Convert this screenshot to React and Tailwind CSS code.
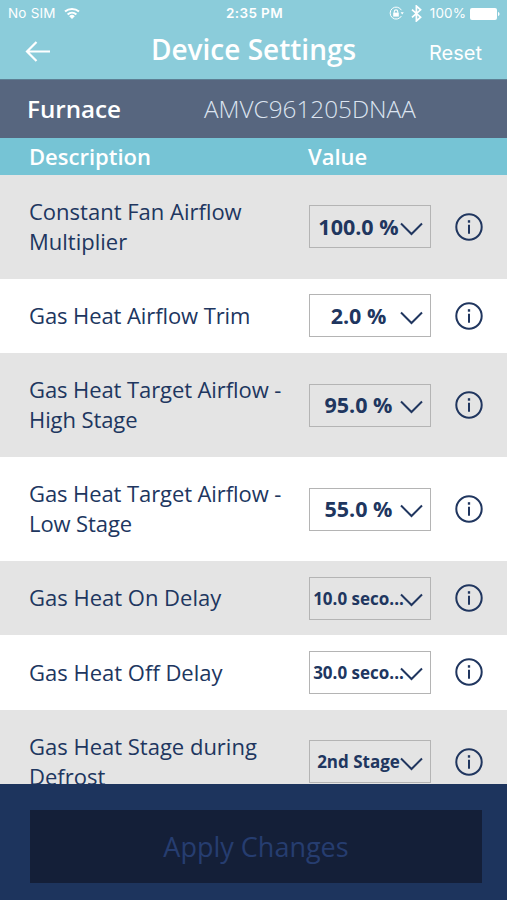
import { useState } from 'react';

const ROWS = [
  { label: 'Constant Fan Airflow Multiplier', value: '100.0 %', tall: true },
  { label: 'Gas Heat Airflow Trim', value: '2.0 %', tight: true },
  { label: 'Gas Heat Target Airflow - High Stage', value: '95.0 %', tall: true, tight: true },
  { label: 'Gas Heat Target Airflow - Low Stage', value: '55.0 %', tall: true, tight: true },
  { label: 'Gas Heat On Delay', value: '10.0 seco...', small: true },
  { label: 'Gas Heat Off Delay', value: '30.0 seco...', small: true },
  { label: 'Gas Heat Stage during Defrost', value: '2nd Stage', small: true, tall: true }
];

function StatusBar() {
  return (
    <div className="grid h-[27px] grid-cols-3 items-center pl-2 pr-[7px] font-['Inter',sans-serif] text-[13.5px] leading-none text-white">
      <div className="flex items-center gap-[8px]">
        <span className="tracking-[0.2px]">No SIM</span>
        <svg width="16" height="13" viewBox="0 0 16 13" fill="none" stroke="currentColor" strokeWidth="2">
          <path d="M1 4.6a10.4 10.4 0 0 1 14 0" />
          <path d="M3.6 7.4a6.6 6.6 0 0 1 8.8 0" />
          <path d="M8 12 5.2 9.2a4 4 0 0 1 5.6 0Z" fill="currentColor" stroke="none" />
        </svg>
      </div>
      <span className="pl-px text-center font-semibold tracking-[0.4px]">2:35 PM</span>
      <div className="flex items-center justify-end">
        <svg className="mr-[7px]" width="15" height="15" viewBox="0 0 15 15" fill="none" stroke="currentColor">
          <path d="M12.4 4.2A6 6 0 1 0 12.4 10" strokeWidth="1" />
          <path d="M11.6 6.2h3.2l-1.6 2.4Z" fill="currentColor" stroke="none" />
          <rect x="4.2" y="6.6" width="5.6" height="4" fill="currentColor" stroke="none" />
          <path d="M5.3 6.8V5.6a1.7 1.7 0 0 1 3.4 0v1.2" strokeWidth="1.1" />
        </svg>
        <svg className="mr-[8px]" width="11" height="17" viewBox="0 0 11 17" fill="none" stroke="currentColor" strokeWidth="1.7">
          <path d="m1 4.6 8.6 7.6L5.4 16V1l4.2 3.8L1 12.4" />
        </svg>
        <span className="mr-1 tracking-[0.1px]">100%</span>
        <svg width="30" height="12" viewBox="0 0 30 12" fill="currentColor">
          <rect width="27" height="12" rx="2" />
          <path d="M28 4c2 .4 2 3.6 0 4Z" />
        </svg>
      </div>
    </div>
  );
}

function InfoIcon() {
  return (
    <svg width="28" height="28" viewBox="0 0 28 28" fill="none" stroke="currentColor">
      <circle cx="14" cy="14" r="12.7" strokeWidth="2" />
      <path d="M14 11.8v8.9" strokeWidth="2" />
      <path d="M14 7.2v2.5" strokeWidth="2.3" />
    </svg>
  );
}

function SettingRow({ row }) {
  return (
    <div className={`flex shrink-0 items-center pl-[29px] odd:bg-[#e4e4e4] even:bg-white ${row.tall ? 'h-[104.2px]' : 'h-[74.1px]'}`}>
      <p className={`w-[280px] shrink-0 pr-4 text-[22px] leading-[29.8px] ${row.tight ? 'tracking-[-0.09px]' : ''}`}>
        {row.label}
      </p>
      <button className="flex h-[43px] w-[122px] shrink-0 items-center border-[1.5px] border-[#b4b4b4] font-bold">
        <span className={`-ml-px w-[99px] shrink-0 whitespace-nowrap text-center ${row.small ? 'text-[17px]' : 'text-[21.5px]'}`}>
          {row.value}
        </span>
        <svg className="-ml-[8px] mt-1 shrink-0" width="23" height="14" viewBox="0 0 23 14" fill="none" stroke="currentColor" strokeWidth="2">
          <path d="m1 1.5 10.5 10.5L22 1.5" />
        </svg>
      </button>
      <button className="ml-[24px]" aria-label="Info">
        <InfoIcon />
      </button>
    </div>
  );
}

export default function App() {
  const [rows] = useState(ROWS);

  return (
    <main className="flex h-[900px] w-[507px] flex-col overflow-hidden bg-white font-['Open_Sans',sans-serif] text-[#20365f]">

      {/* Header */}
      <header className="h-[79px] shrink-0 bg-[#8bccda] text-white">
        <StatusBar />
        <div className="grid h-[46px] grid-cols-[100px_1fr_100px] items-center">
          <button className="pl-[25px] pt-0.5" aria-label="Back">
            <svg width="26" height="21" viewBox="0 0 26 21" fill="none" stroke="currentColor" strokeWidth="2.2">
              <path d="M25 10.5H2M11.5 1 2 10.5l9.5 9.5" />
            </svg>
          </button>
          <h1 className="-mt-0.5 text-center text-[28px] font-semibold leading-none">Device Settings</h1>
          <button className="mt-[5px] pr-[25px] text-right font-['Inter',sans-serif] text-[20px]">Reset</button>
        </div>
      </header>

      {/* Equipment */}
      <div className="flex h-[59px] shrink-0 items-center border-t border-[#5d7f94] bg-[#57667f] pl-[27px] text-white">
        <h2 className="w-[177px] text-[24.2px] font-semibold">Furnace</h2>
        <span className="text-[24.3px] font-light text-[#dce4f0]">AMVC961205DNAA</span>
      </div>

      {/* Column titles */}
      <div className="flex h-[36.7px] shrink-0 items-center bg-[#76c4d5] pl-[29px] text-[22px] font-semibold text-white">
        <span className="w-[279px]">Description</span>
        <span>Value</span>
      </div>

      <div className="flex min-h-0 flex-1 flex-col overflow-hidden">
        {rows.map((row) => (
          <SettingRow key={row.label} row={row} />
        ))}
      </div>

      {/* Footer */}
      <footer className="h-[116px] shrink-0 bg-[#1d345d] pl-[30px] pr-[25px] pt-[26px]">
        <button disabled className="h-[73px] w-full bg-[#141f38] pt-0.5 text-[27px] text-[#263d70]">
          Apply Changes
        </button>
      </footer>
    </main>
  );
}
